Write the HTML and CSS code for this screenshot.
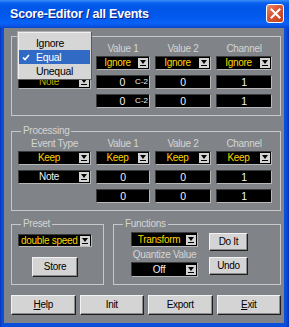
FILE: index.html
```html
<!DOCTYPE html>
<html>
<head>
<meta charset="utf-8">
<link rel="stylesheet" href="styles.css">
</head>
<body>
<div class="window">
  <div class="titlebar">
    <span class="title">Score-Editor / all Events</span>
    <span class="close"><svg width="11" height="11" viewBox="0 0 11 11"><path d="M1.5 1.5l8 8M9.5 1.5l-8 8" stroke="#fff" stroke-width="2" stroke-linecap="square"/></svg></span>
  </div>
  <div class="client">
    <div class="group grid-group">
      <div class="heads"><span></span><span>Value 1</span><span>Value 2</span><span>Channel</span></div>
      <div class="fields">
        <div class="dd"><span class="txt"></span><svg class="arr" viewBox="0 0 10 10"><rect width="10" height="10" fill="#d4d4d4"/><path d="M2 2h6l-3 4z" fill="#000"/><path d="M2 7.5h6" stroke="#000"/></svg></div>
        <div class="dd"><span class="txt">Ignore</span><svg class="arr" viewBox="0 0 10 10"><rect width="10" height="10" fill="#d4d4d4"/><path d="M2 2h6l-3 4z" fill="#000"/><path d="M2 7.5h6" stroke="#000"/></svg></div>
        <div class="dd"><span class="txt">Ignore</span><svg class="arr" viewBox="0 0 10 10"><rect width="10" height="10" fill="#d4d4d4"/><path d="M2 2h6l-3 4z" fill="#000"/><path d="M2 7.5h6" stroke="#000"/></svg></div>
        <div class="dd"><span class="txt">Ignore</span><svg class="arr" viewBox="0 0 10 10"><rect width="10" height="10" fill="#d4d4d4"/><path d="M2 2h6l-3 4z" fill="#000"/><path d="M2 7.5h6" stroke="#000"/></svg></div>

        <div class="dd"><span class="txt dim">Note</span><svg class="arr" viewBox="0 0 10 10"><rect width="10" height="10" fill="#d4d4d4"/><path d="M2 2h6l-3 4z" fill="#000"/><path d="M2 7.5h6" stroke="#000"/></svg></div>
        <div class="vb note-vb"><span class="num">0</span><span class="pitch">C-2</span></div>
        <div class="vb">0</div>
        <div class="vb">1</div>

        <div></div>
        <div class="vb note-vb"><span class="num">0</span><span class="pitch">C-2</span></div>
        <div class="vb">0</div>
        <div class="vb">1</div>
      </div>
    </div>

    <div class="group grid-group proc">
      <span class="legend">Processing</span>
      <div class="heads"><span>Event Type</span><span>Value 1</span><span>Value 2</span><span>Channel</span></div>
      <div class="fields">
        <div class="dd"><span class="txt">Keep</span><svg class="arr" viewBox="0 0 10 10"><rect width="10" height="10" fill="#d4d4d4"/><path d="M2 2h6l-3 4z" fill="#000"/><path d="M2 7.5h6" stroke="#000"/></svg></div>
        <div class="dd"><span class="txt">Keep</span><svg class="arr" viewBox="0 0 10 10"><rect width="10" height="10" fill="#d4d4d4"/><path d="M2 2h6l-3 4z" fill="#000"/><path d="M2 7.5h6" stroke="#000"/></svg></div>
        <div class="dd"><span class="txt">Keep</span><svg class="arr" viewBox="0 0 10 10"><rect width="10" height="10" fill="#d4d4d4"/><path d="M2 2h6l-3 4z" fill="#000"/><path d="M2 7.5h6" stroke="#000"/></svg></div>
        <div class="dd"><span class="txt">Keep</span><svg class="arr" viewBox="0 0 10 10"><rect width="10" height="10" fill="#d4d4d4"/><path d="M2 2h6l-3 4z" fill="#000"/><path d="M2 7.5h6" stroke="#000"/></svg></div>

        <div class="dd"><span class="txt white">Note</span><svg class="arr" viewBox="0 0 10 10"><rect width="10" height="10" fill="#d4d4d4"/><path d="M2 2h6l-3 4z" fill="#000"/><path d="M2 7.5h6" stroke="#000"/></svg></div>
        <div class="vb">0</div>
        <div class="vb">0</div>
        <div class="vb">1</div>

        <div></div>
        <div class="vb">0</div>
        <div class="vb">0</div>
        <div class="vb">1</div>
      </div>
    </div>

    <div class="lower">
      <div class="group preset">
        <span class="legend">Preset</span>
        <div class="dd left"><span class="txt">double speed</span><svg class="arr" viewBox="0 0 10 10"><rect width="10" height="10" fill="#d4d4d4"/><path d="M2 2h6l-3 4z" fill="#000"/><path d="M2 7.5h6" stroke="#000"/></svg></div>
        <div class="btn store">Store</div>
      </div>
      <div class="group functions">
        <span class="legend">Functions</span>
        <div class="fcol">
          <div class="dd"><span class="txt">Transform</span><svg class="arr" viewBox="0 0 10 10"><rect width="10" height="10" fill="#d4d4d4"/><path d="M2 2h6l-3 4z" fill="#000"/><path d="M2 7.5h6" stroke="#000"/></svg></div>
          <div class="qlabel">Quantize Value</div>
          <div class="dd"><span class="txt white">Off</span><svg class="arr" viewBox="0 0 10 10"><rect width="10" height="10" fill="#d4d4d4"/><path d="M2 2h6l-3 4z" fill="#000"/><path d="M2 7.5h6" stroke="#000"/></svg></div>
        </div>
        <div class="bcol">
          <div class="btn">Do It</div>
          <div class="btn">Undo</div>
        </div>
      </div>
    </div>

    <div class="buttons">
      <div class="btn"><u>H</u>elp</div>
      <div class="btn">Init</div>
      <div class="btn">Export</div>
      <div class="btn"><u>E</u>xit</div>
    </div>

    <div class="popup">
      <div class="item">Ignore</div>
      <div class="item sel"><svg class="check" width="8" height="7" viewBox="0 0 8 7"><path d="M1 3.5l2 2 4-4.5" stroke="#fff" stroke-width="1.6" fill="none"/></svg>Equal</div>
      <div class="item">Unequal</div>
    </div>
  </div>
</div>
</body>
</html>
```

FILE: styles.css
```css
* { box-sizing: border-box; }
html, body { margin: 0; padding: 0; }
body {
  width: 289px;
  height: 327px;
  overflow: hidden;
  font-family: "Liberation Sans", Arial, sans-serif;
  font-size: 10px;
  letter-spacing: -0.3px;
  background: #0a4fdc;
}
.window {
  width: 289px;
  height: 327px;
  display: flex;
  flex-direction: column;
  background: linear-gradient(to right, #0831b8 0, #0a4fdc 2px, #0a4fdc 286px, #0831b8 289px);
}
.titlebar {
  height: 28px;
  flex: none;
  display: flex;
  align-items: center;
  justify-content: space-between;
  padding: 0 5px 0 10px;
  background: linear-gradient(to bottom, #3c8ef8 0, #0a60ee 3px, #0056e6 7px, #0058ec 16px, #0962f6 23px, #0a55e4 26px, #0843cc 28px);
}
.title {
  color: #fff;
  font-weight: bold;
  font-size: 12.5px;
  letter-spacing: -0.2px;
  text-shadow: 1px 1px 0 #0a1f8a;
}
.close {
  width: 18px;
  height: 19px;
  border: 1px solid #fff;
  border-radius: 3px;
  background: linear-gradient(135deg, #ee8a6a 0, #d85a36 40%, #c0401c 100%);
  display: flex;
  align-items: center;
  justify-content: center;
  margin-top: -1px;
}
.client {
  flex: 1;
  margin: 0 5px 4px 4px;
  background: #808488;
  padding: 8px 3px 8px 7px;
  position: relative;
  display: flex;
  flex-direction: column;
}
.group {
  border: 1px solid #c8c8c8;
  position: relative;
}
.legend {
  position: absolute;
  top: -7px;
  left: 9px;
  padding: 0 2px;
  background: #808488;
  color: #d4d4d4;
  line-height: 12px;
  white-space: nowrap;
}
.grid-group {
  padding: 6px 8px 7px 6px;
}
.proc { margin-top: 15px; }
.heads, .fields {
  display: grid;
  grid-template-columns: 73px 54px 56px 56px;
  column-gap: 5px;
}
.heads {
  height: 12px;
  line-height: 12px;
  margin-bottom: 1px;
  color: #d4d4d4;
  text-align: center;
  white-space: nowrap;
}
.fields {
  grid-template-rows: 14px 14px 14px;
  row-gap: 5px;
}
.dd {
  height: 14px;
  background: #000;
  border: 1px solid;
  border-color: #3a3a3a #b8b8b8 #b8b8b8 #3a3a3a;
  display: flex;
  align-items: center;
  padding-right: 1px;
  overflow: hidden;
}
.dd .txt {
  flex: 1;
  min-width: 0;
  text-align: center;
  color: #ffd400;
  white-space: nowrap;
  overflow: hidden;
  line-height: 12px;
}
.dd .txt.dim { color: #c8a800; }
.dd .txt.white { color: #f0f0f0; }
.dd.left .txt { text-align: left; padding-left: 2px; }
.arr {
  width: 10px;
  height: 10px;
  flex: none;
}
.vb {
  height: 14px;
  background: #000;
  border: 1px solid;
  border-color: #3a3a3a #b8b8b8 #b8b8b8 #3a3a3a;
  color: #f4f4f4;
  display: flex;
  align-items: center;
  justify-content: center;
  line-height: 12px;
  font-size: 10.5px;
}
.vb.note-vb {
  justify-content: flex-end;
  padding-right: 1px;
}
.vb .num { margin-right: 10px; }
.vb .pitch { font-size: 8px; letter-spacing: 0; }
.lower {
  display: flex;
  gap: 9px;
  margin-top: 13px;
  height: 61px;
}
.preset {
  width: 93px;
  flex: none;
  padding: 9px 0 0 6px;
}
.preset .dd {
  width: 74px;
  height: 13px;
}
.btn {
  background: #d4d4d4;
  border: 1px solid;
  border-color: #f2f2f2 #1e1e1e #1e1e1e #f2f2f2;
  box-shadow: inset -1px -1px 0 #8c8c8c;
  color: #000;
  display: flex;
  align-items: center;
  justify-content: center;
  white-space: nowrap;
  line-height: 12px;
}
.store {
  width: 46px;
  height: 20px;
  margin: 10px 0 0 14px;
}
.functions {
  flex: 1;
  display: flex;
  gap: 11px;
  padding: 7px 0 0 17px;
}
.fcol {
  width: 67px;
  display: flex;
  flex-direction: column;
}
.fcol .dd { height: 15px; }
.qlabel {
  height: 15px;
  line-height: 15px;
  text-align: center;
  color: #d4d4d4;
  white-space: nowrap;
}
.bcol {
  width: 39px;
  display: flex;
  flex-direction: column;
  gap: 6px;
  padding-top: 1px;
}
.bcol .btn { height: 18px; }
.buttons {
  display: grid;
  grid-template-columns: repeat(4, 1fr);
  gap: 4px;
  margin-top: 10px;
  height: 20px;
}
.popup {
  position: absolute;
  left: 13px;
  top: 3px;
  width: 75px;
  height: 49px;
  background: #d6d6d6;
  border: 1px solid;
  border-color: #b0b0b0 #5a5a5a #5a5a5a #b0b0b0;
  box-shadow: inset 1px 1px 0 #f0f0f0;
  padding: 4px 1px 1px 1px;
  display: flex;
  flex-direction: column;
}
.item {
  height: 14px;
  line-height: 14px;
  padding-left: 17px;
  color: #000;
  position: relative;
  font-size: 10.5px;
}
.item.sel {
  background: #316ac5;
  color: #fff;
}
.check {
  position: absolute;
  left: 3px;
  top: 4px;
}
```
